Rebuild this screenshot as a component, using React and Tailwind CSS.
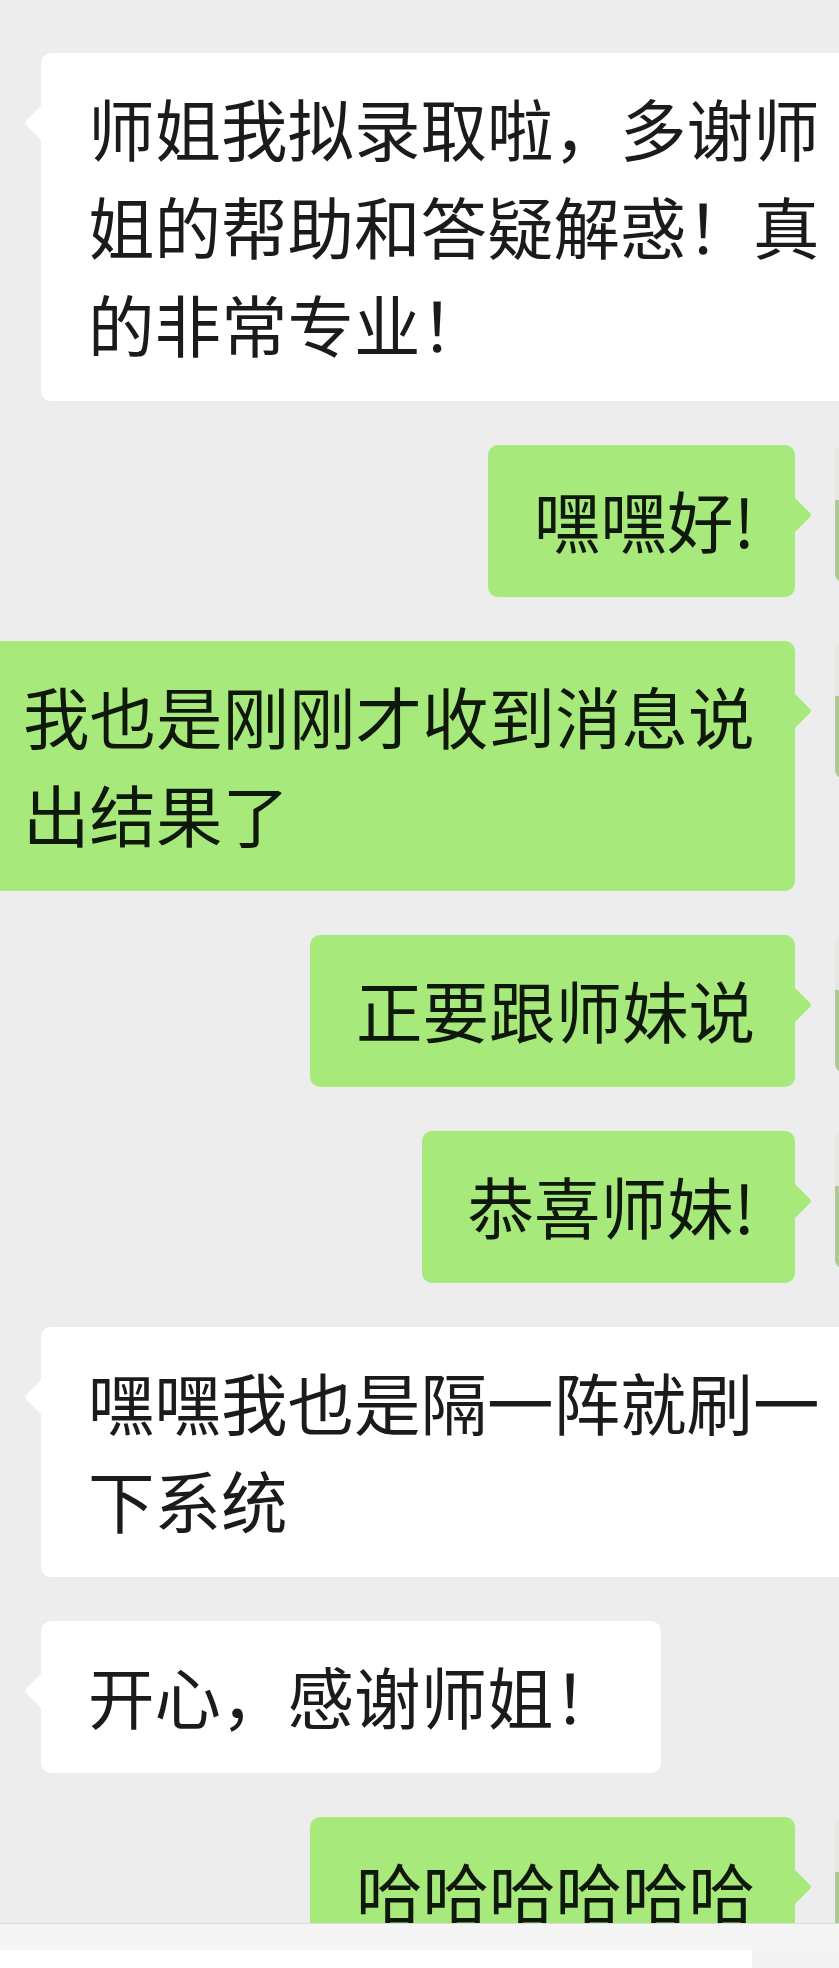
const font = "font-['Noto_Sans_CJK_SC','Noto_Sans',sans-serif]";

const messages = [
  { side: "left", text: "师姐我拟录取啦，多谢师姐的帮助和答疑解惑！真的非常专业！" },
  { side: "right", text: "嘿嘿好!" },
  { side: "right", text: "我也是刚刚才收到消息说出结果了" },
  { side: "right", text: "正要跟师妹说" },
  { side: "right", text: "恭喜师妹!" },
  { side: "left", text: "嘿嘿我也是隔一阵就刷一下系统" },
  { side: "left", text: "开心，感谢师姐！" },
  { side: "right", text: "哈哈哈哈哈哈" },
];

function LeftBubble({ text }) {
  return (
    <div className="flex pl-[41px]">
      <div className="relative shrink-0 max-w-[820px] bg-white rounded-[10px] pl-[47px] pr-[41px] pt-[25px] pb-[29px]">
        <svg className="absolute -left-[17px] top-[52px]" width="18" height="36" viewBox="0 0 18 36">
          <path d="M18 0 L2 16 Q0 18 2 20 L18 36 Z" fill="#ffffff" />
        </svg>
        <p className="text-[66.5px] leading-[98px] text-[#1b1b1b]">{text}</p>
      </div>
    </div>
  );
}

function RightBubble({ text }) {
  return (
    <div className="flex justify-end items-start">
      <div className="relative shrink-0 max-w-[818px] bg-[#a8e97c] rounded-[10px] pl-[46px] pr-[40px] pt-[25px] pb-[29px]">
        <svg className="absolute -right-[17px] top-[52px]" width="18" height="36" viewBox="0 0 18 36">
          <path d="M0 0 L16 16 Q18 18 16 20 L0 36 Z" fill="#a8e97c" />
        </svg>
        <p className="text-[66.5px] leading-[98px] text-[#0f190b]">{text}</p>
      </div>
      {/* avatar, only its left edge shows */}
      <div className="ml-[40px] -mr-[133px] shrink-0 w-[137px] h-[137px] rounded-[8px] bg-[linear-gradient(to_bottom,#e6e8e4_40%,#aec891_40%)]" />
    </div>
  );
}

export default function App() {
  return (
    <div className={`w-[839px] h-[1968px] overflow-hidden bg-[#ededed] ${font}`}>
      <div className="h-[1923px] overflow-hidden pt-[53px] flex flex-col gap-[44px]">
        {messages.map((m, i) =>
          m.side === "left" ? <LeftBubble key={i} text={m.text} /> : <RightBubble key={i} text={m.text} />
        )}
      </div>
      <div className="h-[45px] bg-[#f5f5f5] border-t border-[#dcdcdc] flex flex-col justify-end">
        <div className="h-[18px] flex">
          <div className="w-[752px] bg-white" />
          <div className="flex-1 bg-[#f3f3f3]" />
        </div>
      </div>
    </div>
  );
}
